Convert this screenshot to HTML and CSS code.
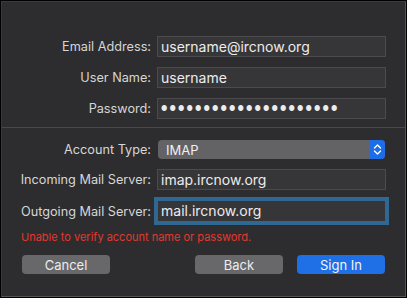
FILE: index.html
```html
<!DOCTYPE html>
<html lang="en">
<head>
    <meta charset="UTF-8">
    <title>Add Account</title>
    <link rel="stylesheet" href="styles.css">
</head>
<body>
    <div class="window">
        <div class="section top">
            <label class="label">Email Address:</label>
            <div class="field">username@ircnow.org</div>
            <label class="label">User Name:</label>
            <div class="field">username</div>
            <label class="label">Password:</label>
            <div class="field dots">●●●●●●●●●●●●●●●●●●●●●</div>
        </div>

        <div class="separator"></div>

        <div class="section bottom">
            <label class="label">Account Type:</label>
            <div class="popup">
                <span>IMAP</span>
                <span class="stepper">
                    <svg width="9" height="13" viewBox="0 0 9 13">
                        <path d="M1.5 5 L4.5 2 L7.5 5 M1.5 8 L4.5 11 L7.5 8" fill="none" stroke="#fff" stroke-width="1.4" stroke-linecap="round" stroke-linejoin="round"/>
                    </svg>
                </span>
            </div>
            <label class="label">Incoming Mail Server:</label>
            <div class="field">imap.ircnow.org</div>
            <label class="label">Outgoing Mail Server:</label>
            <div class="field focused">mail.ircnow.org</div>
        </div>

        <p class="error">Unable to verify account name or password.</p>

        <div class="buttons">
            <button class="btn">Cancel</button>
            <span class="spacer"></span>
            <button class="btn">Back</button>
            <button class="btn primary">Sign In</button>
        </div>
    </div>
</body>
</html>
```

FILE: styles.css
```css
body {
    margin: 0;
    background: #000;
    font-family: 'Inter', 'Liberation Sans', sans-serif;
    width: 407px;
    height: 298px;
    overflow: hidden;
}
.window {
    margin: 1px 0 0 1px;
    width: 403px;
    height: 294px;
    background: #2d2d2f;
    border: 1px solid #545456;
    border-top-color: #3a3a3c;
    border-left-color: #3a3a3c;
}
.section {
    display: grid;
    grid-template-columns: 149px 229px;
    column-gap: 6px;
    align-items: center;
}
.top {
    padding-top: 34px;
    grid-template-rows: 21px 21px 21px;
    row-gap: 10px;
}
.bottom {
    padding-top: 12px;
    grid-template-rows: 19px 21px 22px;
    row-gap: 10px;
}
.label {
    text-align: right;
    color: #d6d6d6;
    font-size: 12.7px;
    white-space: nowrap;
}
.field {
    box-sizing: border-box;
    height: 100%;
    background: #363638;
    border: 1px solid #4b4b4d;
    color: #ececec;
    font-size: 14px;
    line-height: 19px;
    padding-left: 3px;
}
.dots {
    font-size: 7px;
    letter-spacing: 2.1px;
}
.focused {
    box-shadow: 0 0 0 3px #2e6893;
    border-color: #2e6893;
}
.separator {
    margin-top: 8px;
    height: 1px;
    background: #48484a;
}
.popup {
    height: 19px;
    display: flex;
    align-items: center;
    justify-content: space-between;
    background: #636366;
    border-radius: 4px;
    color: #f0f0f0;
    font-size: 13px;
    padding-left: 8px;
    margin-left: 1px;
    margin-right: 1px;
    overflow: hidden;
}
.stepper {
    width: 16px;
    height: 19px;
    background: #1d6ce8;
    display: flex;
    align-items: center;
    justify-content: center;
}
.error {
    margin: 8px 0 0 19px;
    color: #e4372e;
    font-size: 11px;
    line-height: 14px;
}
.buttons {
    display: flex;
    gap: 14px;
    margin: 11px 0 0 20px;
    width: 363px;
}
.spacer {
    flex: 1;
}
.btn {
    width: 88px;
    height: 19px;
    border: none;
    border-radius: 4px;
    background: #68686b;
    color: #ececec;
    font-family: inherit;
    font-size: 13px;
    padding: 0;
}
.primary {
    background: #1f6fe6;
    color: #f4f4f4;
}
```
